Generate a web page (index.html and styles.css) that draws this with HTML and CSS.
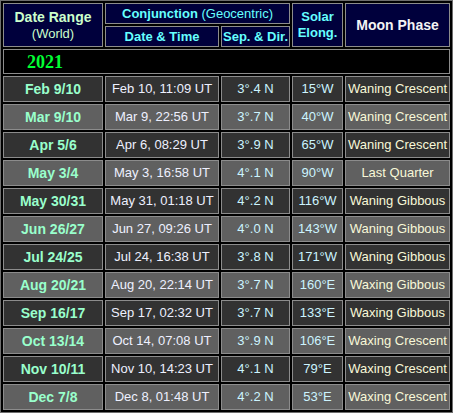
FILE: index.html
```html
<!DOCTYPE html>
<html>
<head>
<meta charset="utf-8">
<link rel="stylesheet" href="styles.css">
</head>
<body>
<table class="conj">
  <colgroup>
    <col class="c1"><col class="c2"><col class="c3"><col class="c4"><col class="c5">
  </colgroup>
  <thead>
    <tr class="h1">
      <th rowspan="2" class="hdr range">Date Range<br><span class="world">(World)</span></th>
      <th colspan="2" class="hdr cyan"><b>Conjunction</b> <span class="geo">(Geocentric)</span></th>
      <th rowspan="2" class="hdr cyan">Solar<br>Elong.</th>
      <th rowspan="2" class="hdr phase">Moon Phase</th>
    </tr>
    <tr class="h2">
      <th class="hdr cyan">Date &amp; Time</th>
      <th class="hdr cyan">Sep. &amp; Dir.</th>
    </tr>
  </thead>
  <tbody>
    <tr class="year"><td colspan="5">2021</td></tr>
    <tr class="dark"><td class="rng">Feb 9/10</td><td class="dt">Feb 10, 11:09 UT</td><td class="sep">3°.4 N</td><td class="el">15°W</td><td class="ph">Waning Crescent</td></tr>
    <tr class="light"><td class="rng">Mar 9/10</td><td class="dt">Mar 9, 22:56 UT</td><td class="sep">3°.7 N</td><td class="el">40°W</td><td class="ph">Waning Crescent</td></tr>
    <tr class="dark"><td class="rng">Apr 5/6</td><td class="dt">Apr 6, 08:29 UT</td><td class="sep">3°.9 N</td><td class="el">65°W</td><td class="ph">Waning Crescent</td></tr>
    <tr class="light"><td class="rng">May 3/4</td><td class="dt">May 3, 16:58 UT</td><td class="sep">4°.1 N</td><td class="el">90°W</td><td class="ph">Last Quarter</td></tr>
    <tr class="dark"><td class="rng">May 30/31</td><td class="dt">May 31, 01:18 UT</td><td class="sep">4°.2 N</td><td class="el">116°W</td><td class="ph">Waning Gibbous</td></tr>
    <tr class="light"><td class="rng">Jun 26/27</td><td class="dt">Jun 27, 09:26 UT</td><td class="sep">4°.0 N</td><td class="el">143°W</td><td class="ph">Waning Gibbous</td></tr>
    <tr class="dark"><td class="rng">Jul 24/25</td><td class="dt">Jul 24, 16:38 UT</td><td class="sep">3°.8 N</td><td class="el">171°W</td><td class="ph">Waning Gibbous</td></tr>
    <tr class="light"><td class="rng">Aug 20/21</td><td class="dt">Aug 20, 22:14 UT</td><td class="sep">3°.7 N</td><td class="el">160°E</td><td class="ph">Waxing Gibbous</td></tr>
    <tr class="dark"><td class="rng">Sep 16/17</td><td class="dt">Sep 17, 02:32 UT</td><td class="sep">3°.7 N</td><td class="el">133°E</td><td class="ph">Waxing Gibbous</td></tr>
    <tr class="light"><td class="rng">Oct 13/14</td><td class="dt">Oct 14, 07:08 UT</td><td class="sep">3°.9 N</td><td class="el">106°E</td><td class="ph">Waxing Crescent</td></tr>
    <tr class="dark"><td class="rng">Nov 10/11</td><td class="dt">Nov 10, 14:23 UT</td><td class="sep">4°.1 N</td><td class="el">79°E</td><td class="ph">Waxing Crescent</td></tr>
    <tr class="light"><td class="rng">Dec 7/8</td><td class="dt">Dec 8, 01:48 UT</td><td class="sep">4°.2 N</td><td class="el">53°E</td><td class="ph">Waxing Crescent</td></tr>
  </tbody>
</table>
</body>
</html>
```
FILE: styles.css
```css
html, body {
  margin: 0;
  padding: 0;
  background: #000;
}

.conj {
  width: 453px;
  table-layout: fixed;
  border-collapse: separate;
  border-spacing: 2px;
  border: 1px solid #6e6e6e;
  background: #000;
  font-family: "Liberation Sans", Arial, sans-serif;
  font-size: 13px;
}

.c1 { width: 100px; }
.c2 { width: 114px; }
.c3 { width: 69px; }
.c4 { width: 51px; }
.c5 { width: 105px; }

.conj th,
.conj td {
  box-sizing: border-box;
  border: 1px solid #8c8c8c;
  padding: 0;
  text-align: center;
  vertical-align: middle;
  line-height: 16px;
}

.h1 th, .h2 th { height: 21px; }

.hdr {
  background: #00003c;
  font-weight: bold;
}

.range { color: #ccffcc; font-size: 14px; line-height: 18px; }
.world { font-weight: normal; font-size: 13px; }
.cyan { color: #66ffff; }
.geo { font-weight: normal; }
.phase { color: #f4f4f4; font-size: 14px; }

.year td {
  height: 25px;
  background: #000;
  text-align: left;
  padding-left: 23px;
  color: #00ff33;
  font-family: "Liberation Serif", "Times New Roman", serif;
  font-weight: bold;
  font-size: 18px;
  line-height: 20px;
}

.dark td, .light td { height: 26px; }
.dark td { background: #323232; }
.light td { background: #606060; }

.rng {
  color: #99ffcc;
  font-weight: bold;
  font-size: 14px;
}
.dt { color: #eef0ff; }
.sep { color: #ccf4ff; }
.el { color: #ccf4ff; }
.ph { color: #f8f8d8; }
```
